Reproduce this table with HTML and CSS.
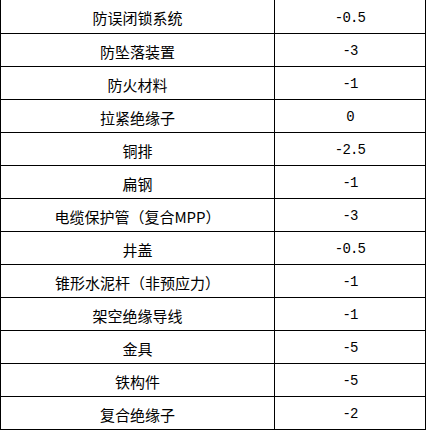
FILE: index.html
```html
<!DOCTYPE html>
<html lang="zh-CN">
<head>
<meta charset="utf-8">
<title>扣分表</title>
<link rel="stylesheet" href="styles.css">
</head>
<body>
<div class="sheet">
  <div class="cell name">防误闭锁系统</div><div class="cell val">-0.5</div>
  <div class="cell name">防坠落装置</div><div class="cell val">-3</div>
  <div class="cell name">防火材料</div><div class="cell val">-1</div>
  <div class="cell name">拉紧绝缘子</div><div class="cell val">0</div>
  <div class="cell name">铜排</div><div class="cell val">-2.5</div>
  <div class="cell name">扁钢</div><div class="cell val">-1</div>
  <div class="cell name">电缆保护管（复合MPP）</div><div class="cell val">-3</div>
  <div class="cell name">井盖</div><div class="cell val">-0.5</div>
  <div class="cell name">锥形水泥杆（非预应力）</div><div class="cell val">-1</div>
  <div class="cell name">架空绝缘导线</div><div class="cell val">-1</div>
  <div class="cell name">金具</div><div class="cell val">-5</div>
  <div class="cell name">铁构件</div><div class="cell val">-5</div>
  <div class="cell name">复合绝缘子</div><div class="cell val">-2</div>
</div>
</body>
</html>
```
FILE: styles.css
```css
html, body {
  margin: 0;
  padding: 0;
  background: #fff;
}
.sheet {
  box-sizing: border-box;
  width: 426px;
  display: grid;
  grid-template-columns: 274px 150px;
  border-left: 1px solid #000;
  border-right: 1px solid #000;
  font-family: "Noto Sans CJK SC", "DejaVu Sans", sans-serif;
  font-size: 15px;
  color: #000;
}
.cell {
  box-sizing: border-box;
  height: 33px;
  border-bottom: 1px solid #000;
  display: flex;
  align-items: center;
  justify-content: center;
  padding-top: 2px;
  line-height: 1;
  white-space: nowrap;
}
.cell:nth-child(1), .cell:nth-child(2) {
  height: 34px;
}
.name {
  border-right: 1px solid #000;
}
.val {
  font-family: "Liberation Mono", "DejaVu Sans Mono", monospace;
  font-size: 14px;
  letter-spacing: -0.8px;
}
```
